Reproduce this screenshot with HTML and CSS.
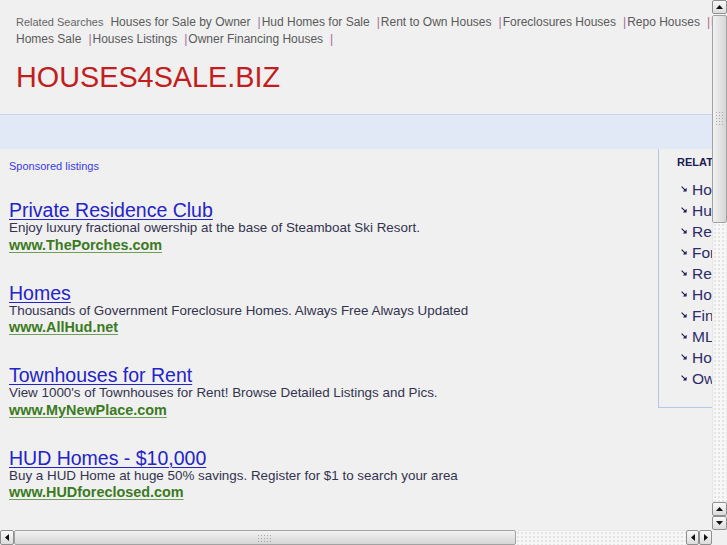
FILE: index.html
```html
<!DOCTYPE html>
<html>
<head>
<meta charset="utf-8">
<title>Houses4sale.biz</title>
<link rel="stylesheet" href="styles.css">
</head>
<body>
<div class="page">
  <div class="related">
    <span class="label">Related Searches</span><a href="#">Houses for Sale by Owner</a><span class="sep">|</span><a href="#">Hud Homes for Sale</a><span class="sep">|</span><a href="#">Rent to Own Houses</a><span class="sep">|</span><a href="#">Foreclosures Houses</a><span class="sep">|</span><a href="#">Repo Houses</a><span class="sep">|</span><a href="#">Hud Homes Sale</a><span class="sep">|</span><a href="#">Houses Listings</a><span class="sep">|</span><a href="#">Owner Financing Houses</a><span class="sep">|</span>
  </div>
  <h1 class="logo">HOUSES4SALE.BIZ</h1>
  <div class="band"></div>
  <div class="main">
    <div class="listings">
      <div class="sponsored">Sponsored listings</div>
      <div class="ad">
        <a class="ad-title" href="#">Private Residence Club</a>
        <div class="ad-desc">Enjoy luxury fractional owership at the base of Steamboat Ski Resort.</div>
        <a class="ad-url" href="#">www.ThePorches.com</a>
      </div>
      <div class="ad">
        <a class="ad-title" href="#">Homes</a>
        <div class="ad-desc">Thousands of Government Foreclosure Homes. Always Free Always Updated</div>
        <a class="ad-url" href="#">www.AllHud.net</a>
      </div>
      <div class="ad">
        <a class="ad-title" href="#">Townhouses for Rent</a>
        <div class="ad-desc">View 1000's of Townhouses for Rent! Browse Detailed Listings and Pics.</div>
        <a class="ad-url" href="#">www.MyNewPlace.com</a>
      </div>
      <div class="ad">
        <a class="ad-title" href="#">HUD Homes - $10,000</a>
        <div class="ad-desc">Buy a HUD Home at huge 50% savings. Register for $1 to search your area</div>
        <a class="ad-url" href="#">www.HUDforeclosed.com</a>
      </div>
    </div>
    <div class="side">
      <div class="side-title">RELATED SEARCHES</div>
      <ul class="side-list">
        <li><svg class="arr" width="6" height="6" viewBox="0 0 6 6"><path d="M0.6 0.6 L4.4 4.4" stroke="#1e1e5a" stroke-width="1.2"/><path d="M5.6 1.8 L5.6 5.6 L1.8 5.6 Z" fill="#1e1e5a"/></svg><a href="#">Houses for Sale by Owner</a></li>
        <li><svg class="arr" width="6" height="6" viewBox="0 0 6 6"><path d="M0.6 0.6 L4.4 4.4" stroke="#1e1e5a" stroke-width="1.2"/><path d="M5.6 1.8 L5.6 5.6 L1.8 5.6 Z" fill="#1e1e5a"/></svg><a href="#">Hud Homes for Sale</a></li>
        <li><svg class="arr" width="6" height="6" viewBox="0 0 6 6"><path d="M0.6 0.6 L4.4 4.4" stroke="#1e1e5a" stroke-width="1.2"/><path d="M5.6 1.8 L5.6 5.6 L1.8 5.6 Z" fill="#1e1e5a"/></svg><a href="#">Rent to Own Houses</a></li>
        <li><svg class="arr" width="6" height="6" viewBox="0 0 6 6"><path d="M0.6 0.6 L4.4 4.4" stroke="#1e1e5a" stroke-width="1.2"/><path d="M5.6 1.8 L5.6 5.6 L1.8 5.6 Z" fill="#1e1e5a"/></svg><a href="#">Foreclosures Houses</a></li>
        <li><svg class="arr" width="6" height="6" viewBox="0 0 6 6"><path d="M0.6 0.6 L4.4 4.4" stroke="#1e1e5a" stroke-width="1.2"/><path d="M5.6 1.8 L5.6 5.6 L1.8 5.6 Z" fill="#1e1e5a"/></svg><a href="#">Repo Houses</a></li>
        <li><svg class="arr" width="6" height="6" viewBox="0 0 6 6"><path d="M0.6 0.6 L4.4 4.4" stroke="#1e1e5a" stroke-width="1.2"/><path d="M5.6 1.8 L5.6 5.6 L1.8 5.6 Z" fill="#1e1e5a"/></svg><a href="#">Houses for Rent</a></li>
        <li><svg class="arr" width="6" height="6" viewBox="0 0 6 6"><path d="M0.6 0.6 L4.4 4.4" stroke="#1e1e5a" stroke-width="1.2"/><path d="M5.6 1.8 L5.6 5.6 L1.8 5.6 Z" fill="#1e1e5a"/></svg><a href="#">Find a Home</a></li>
        <li><svg class="arr" width="6" height="6" viewBox="0 0 6 6"><path d="M0.6 0.6 L4.4 4.4" stroke="#1e1e5a" stroke-width="1.2"/><path d="M5.6 1.8 L5.6 5.6 L1.8 5.6 Z" fill="#1e1e5a"/></svg><a href="#">MLS Listings</a></li>
        <li><svg class="arr" width="6" height="6" viewBox="0 0 6 6"><path d="M0.6 0.6 L4.4 4.4" stroke="#1e1e5a" stroke-width="1.2"/><path d="M5.6 1.8 L5.6 5.6 L1.8 5.6 Z" fill="#1e1e5a"/></svg><a href="#">Houses Listings</a></li>
        <li><svg class="arr" width="6" height="6" viewBox="0 0 6 6"><path d="M0.6 0.6 L4.4 4.4" stroke="#1e1e5a" stroke-width="1.2"/><path d="M5.6 1.8 L5.6 5.6 L1.8 5.6 Z" fill="#1e1e5a"/></svg><a href="#">Owner Financing Houses</a></li>
      </ul>
    </div>
  </div>
</div>

<div class="vscroll">
  <div class="sbtn"><svg width="7" height="4" viewBox="0 0 7 4"><path d="M0 4 L3.5 0 L7 4 Z" fill="#111"/></svg></div>
  <div class="vthumb"><div class="grip vgrip"></div></div>
  <div class="track vtrack"></div>
  <div class="sbtn"><svg width="7" height="4" viewBox="0 0 7 4"><path d="M0 4 L3.5 0 L7 4 Z" fill="#111"/></svg></div>
  <div class="sbtn"><svg width="7" height="4" viewBox="0 0 7 4"><path d="M0 0 L3.5 4 L7 0 Z" fill="#111"/></svg></div>
</div>
<div class="hscroll">
  <div class="sbtn hbtn"><svg width="4" height="7" viewBox="0 0 4 7"><path d="M4 0 L0 3.5 L4 7 Z" fill="#111"/></svg></div>
  <div class="hthumb"><div class="grip hgrip"></div></div>
  <div class="track htrack"></div>
  <div class="sbtn hbtn"><svg width="4" height="7" viewBox="0 0 4 7"><path d="M4 0 L0 3.5 L4 7 Z" fill="#111"/></svg></div>
  <div class="sbtn hbtn"><svg width="4" height="7" viewBox="0 0 4 7"><path d="M0 0 L4 3.5 L0 7 Z" fill="#111"/></svg></div>
</div>
<div class="corner"></div>
</body>
</html>
```
FILE: styles.css
```css
html, body {
  margin: 0;
  padding: 0;
  overflow: hidden;
  background: #f0f0f0;
}
body {
  font-family: "Liberation Sans", Arial, sans-serif;
  color: #333;
}
a { text-decoration: none; }

.page {
  width: 950px;
}

.related {
  width: 740px;
  padding: 14px 0 0 16px;
  font-size: 12px;
  line-height: 17px;
}
.related .label {
  font-size: 11px;
  color: #666;
  margin-right: 7px;
}
.related a {
  color: #5a5a5a;
}
.related .sep {
  color: #a66aa6;
  margin-left: 7px;
  margin-right: 1px;
}

.logo {
  margin: 12px 0 0 16px;
  font-size: 28.8px;
  line-height: 34px;
  font-weight: normal;
  color: #c41d1d;
  letter-spacing: 0;
}

.band {
  margin-top: 20px;
  height: 34px;
  border-top: 1px solid #c6d3ee;
  background: #e1e8f6;
}

.main {
  display: flex;
  align-items: flex-start;
}

.listings {
  width: 649px;
  padding: 10px 0 0 9px;
}
.sponsored {
  font-size: 11px;
  line-height: 14px;
  color: #3a3af2;
  margin-bottom: 27px;
}
.ad {
  display: flex;
  flex-direction: column;
  align-items: flex-start;
  margin-bottom: 29px;
}
.ad-title {
  font-size: 19.5px;
  line-height: 20px;
  color: #2323cf;
  text-decoration: underline;
  text-decoration-thickness: 1px;
  text-underline-offset: 2px;
}
.ad-desc {
  font-size: 13.4px;
  line-height: 16.5px;
  color: #33334f;
}
.ad-url {
  font-size: 14.4px;
  line-height: 17px;
  font-weight: bold;
  color: #3b7a22;
  text-decoration: underline;
  text-decoration-color: #6f9e5a;
  text-decoration-thickness: 1px;
  text-underline-offset: 2px;
}

.side {
  width: 260px;
  border-left: 1px solid #b5c6e6;
  border-bottom: 1px solid #b5c6e6;
  padding: 6px 0 18px 18px;
}
.side-title {
  font-size: 11px;
  line-height: 14px;
  font-weight: bold;
  color: #1b1b55;
  white-space: nowrap;
}
.side-list {
  list-style: none;
  margin: 10px 0 0 0;
  padding: 0 0 0 4px;
}
.side-list li {
  display: flex;
  align-items: center;
  height: 21px;
  font-size: 15.5px;
  white-space: nowrap;
}
.side-list .arr {
  margin-right: 5px;
  position: relative;
  top: -1px;
}
.side-list a {
  color: #2c2c6a;
}

/* fake browser scrollbars */
.vscroll {
  position: fixed;
  top: 0;
  right: 0;
  width: 15px;
  height: 530px;
  display: flex;
  flex-direction: column;
  background: #f6f6f6;
}
.hscroll {
  position: fixed;
  left: 0;
  bottom: 0;
  width: 712px;
  height: 15px;
  display: flex;
  background: #f6f6f6;
}
.corner {
  position: fixed;
  right: 0;
  bottom: 0;
  width: 15px;
  height: 15px;
  background: #f0f0f0;
}
.sbtn {
  box-sizing: border-box;
  width: 15px;
  height: 14px;
  flex: none;
  border: 1px solid #8f8f8f;
  border-radius: 2px;
  background: linear-gradient(#fafafa, #dcdcdc);
  display: flex;
  align-items: center;
  justify-content: center;
}
.hbtn {
  width: 13px;
  height: 15px;
}
.hscroll .hbtn:first-child {
  width: 14px;
}
.track {
  flex: 1;
  background-color: #f7f7f7;
  background-image: radial-gradient(circle, #e2e2e2 0.7px, transparent 0.9px);
  background-size: 4px 4px;
}
.vtrack { border-left: 1px solid #e6e6e6; }
.htrack { border-top: 1px solid #e6e6e6; }
.vthumb {
  box-sizing: border-box;
  height: 208px;
  flex: none;
  margin-top: 1px;
  border: 1px solid #a2a2a2;
  border-radius: 2px;
  background: linear-gradient(90deg, #f2f2f2, #d6d6d6);
  display: flex;
  align-items: center;
  justify-content: center;
}
.hthumb {
  box-sizing: border-box;
  width: 502px;
  flex: none;
  border: 1px solid #a2a2a2;
  border-radius: 2px;
  background: linear-gradient(#f2f2f2, #d6d6d6);
  display: flex;
  align-items: center;
  justify-content: center;
}
.grip {
  background-image: radial-gradient(circle, #a9a9a9 0.6px, transparent 0.8px);
  background-size: 3px 3px;
}
.vgrip { width: 10px; height: 16px; }
.hgrip { width: 16px; height: 8px; }
```
